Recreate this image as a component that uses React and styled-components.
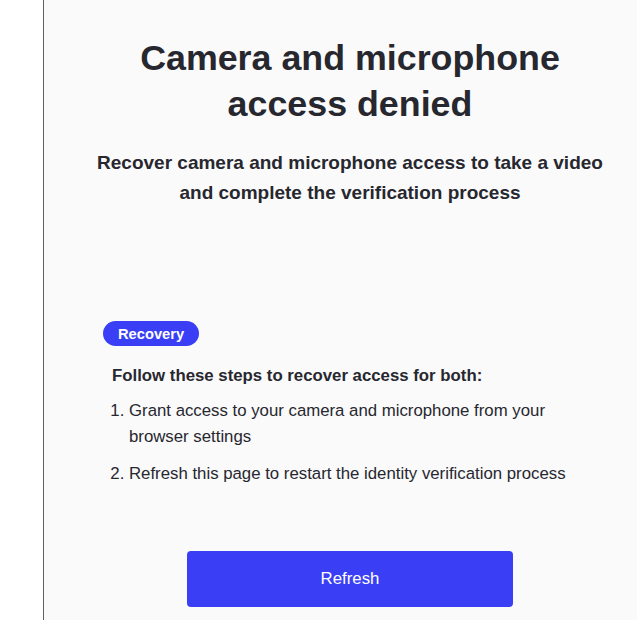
import React from "react";
import styled, { createGlobalStyle } from "styled-components";

const Global = createGlobalStyle`
  html, body { margin: 0; padding: 0; background: #ffffff; }
  body { font-family: "Liberation Sans", Arial, sans-serif; }
  * { box-sizing: border-box; }
`;

const Page = styled.div`
  display: flex;
  min-height: 620px;
`;

const Gutter = styled.div`
  width: 43px;
  flex-shrink: 0;
  background: #ffffff;
`;

const Panel = styled.main`
  flex: 1;
  border-left: 1px solid #5f5f68;
  background: #fafafa;
  padding: 35px 0 0 19px;
  display: flex;
  flex-direction: column;
  align-items: center;
  color: #27272f;
`;

const Title = styled.h1`
  margin: 0;
  max-width: 460px;
  font-size: 35.8px;
  line-height: 46px;
  font-weight: 700;
  text-align: center;
`;

const Subtitle = styled.p`
  margin: 21px 0 0;
  max-width: 530px;
  font-size: 19px;
  line-height: 29.5px;
  font-weight: 700;
  text-align: center;
`;

const Recovery = styled.section`
  width: 494px;
  margin-top: 114px;
  display: flex;
  flex-direction: column;
  align-items: flex-start;
`;

const Badge = styled.span`
  display: inline-flex;
  align-items: center;
  height: 25px;
  padding: 0 15px;
  border-radius: 13px;
  background: #3a3ff5;
  color: #ffffff;
  font-size: 14.7px;
  font-weight: 700;
`;

const StepsHeading = styled.h2`
  margin: 18px 0 0 9px;
  font-size: 16.8px;
  line-height: 24px;
  font-weight: 700;
`;

const Steps = styled.ol`
  margin: 10px 0 0 9px;
  padding: 0 0 0 17px;
  display: flex;
  flex-direction: column;
  gap: 11px;
`;

const Step = styled.li`
  font-size: 16.8px;
  line-height: 26px;
`;

const Button = styled.button`
  margin-top: 64px;
  width: 326px;
  height: 56px;
  border: none;
  border-radius: 4px;
  background: #3a3ff5;
  color: #ffffff;
  font-family: "Liberation Sans", Arial, sans-serif;
  font-size: 16.8px;
  cursor: pointer;
`;

export default function App() {
  return (
    <>
      <Global />
      <Page>
        <Gutter />
        <Panel>
          <Title>Camera and microphone access denied</Title>
          <Subtitle>
            Recover camera and microphone access to take a video and complete the verification process
          </Subtitle>
          <Recovery>
            <Badge>Recovery</Badge>
            <StepsHeading>Follow these steps to recover access for both:</StepsHeading>
            <Steps>
              <Step>Grant access to your camera and microphone from your browser settings</Step>
              <Step>Refresh this page to restart the identity verification process</Step>
            </Steps>
          </Recovery>
          <Button>Refresh</Button>
        </Panel>
      </Page>
    </>
  );
}
